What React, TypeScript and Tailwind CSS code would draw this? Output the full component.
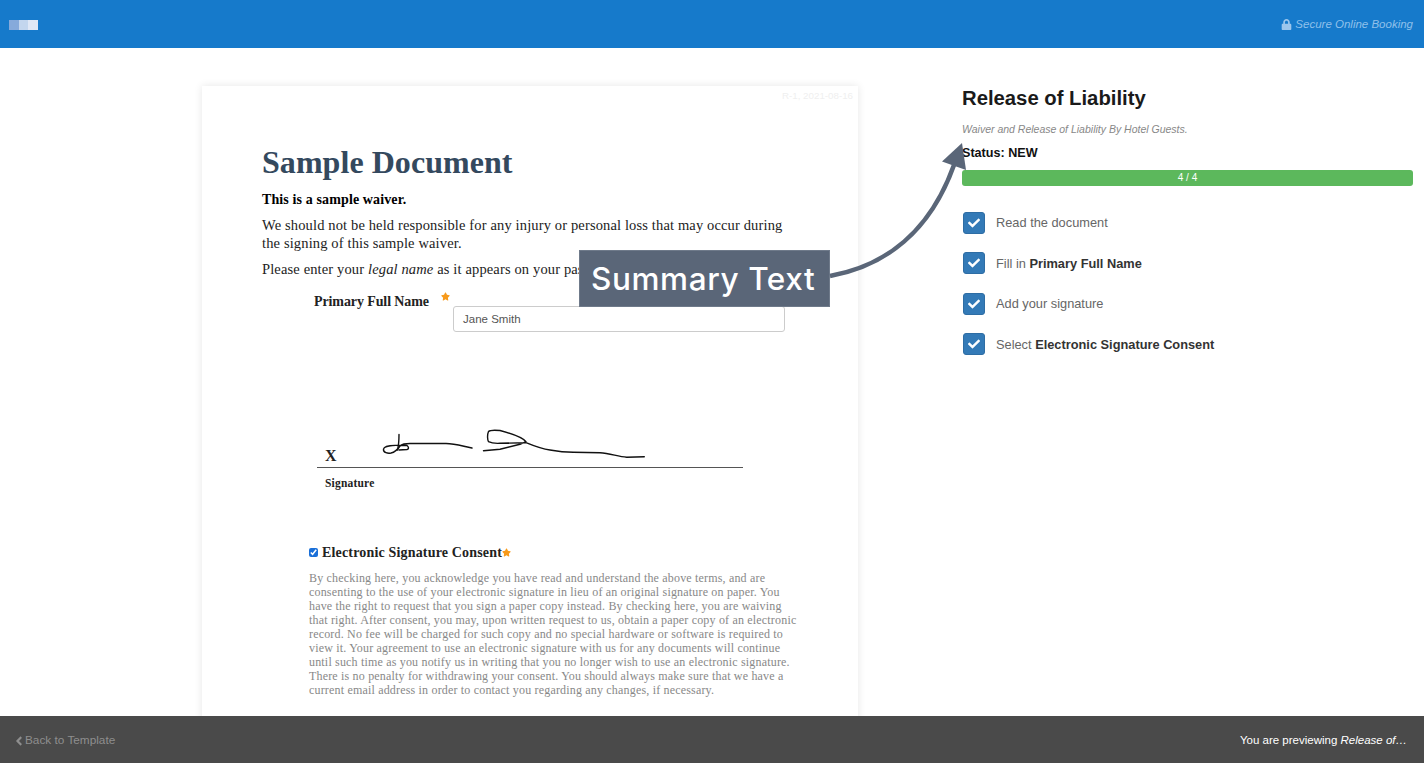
import { FaLock, FaCheck, FaStar, FaAngleLeft } from "react-icons/fa";

const serif = "font-['Liberation_Serif',serif]";

const consentLines = [
  "By checking here, you acknowledge you have read and understand the above terms, and are",
  "consenting to the use of your electronic signature in lieu of an original signature on paper. You",
  "have the right to request that you sign a paper copy instead. By checking here, you are waiving",
  "that right. After consent, you may, upon written request to us, obtain a paper copy of an electronic",
  "record. No fee will be charged for such copy and no special hardware or software is required to",
  "view it. Your agreement to use an electronic signature with us for any documents will continue",
  "until such time as you notify us in writing that you no longer wish to use an electronic signature.",
  "There is no penalty for withdrawing your consent. You should always make sure that we have a",
  "current email address in order to contact you regarding any changes, if necessary.",
];

function CheckRow({ children }: { children: React.ReactNode }) {
  return (
    <div className="flex items-center h-[22px]">
      <div className="ml-px w-[22px] h-[22px] rounded-[3px] bg-[#337ab7] border border-[#2e6da4] flex items-center justify-center text-white">
        <FaCheck size={12} />
      </div>
      <span className="ml-[11px] text-[12.8px] text-[#666]">{children}</span>
    </div>
  );
}

export default function App() {
  return (
    <div className="relative h-screen flex flex-col overflow-hidden bg-white font-['Liberation_Sans',sans-serif]">
      {/* top bar */}
      <header className="h-[48px] shrink-0 bg-[#167acb] flex items-center justify-between pl-[9px] pr-[11px]">
        <div className="flex h-[10px] mt-px">
          <div className="w-[10px] bg-[#86aadb]" />
          <div className="w-[9px] bg-[#c3d6ee]" />
          <div className="w-[10px] bg-[#e0e8f6]" />
        </div>
        <div className="flex items-center gap-[3px] text-[11.5px] italic text-[#8fc0ea]">
          <FaLock size={11} className="text-[#9cc6ec]" />
          <span className="pt-px">Secure Online Booking</span>
        </div>
      </header>

      <main className="flex-1 min-h-0 overflow-hidden flex pl-[202px] pt-[38px]">
        {/* document */}
        <div className="w-[656px] shrink-0 self-start bg-white shadow-[0_0_8px_rgba(0,0,0,0.1)] pb-[40px]">
          <div className="text-right pr-[5px] pt-[4px] text-[9.75px] leading-[12px] text-[#efefef]">R-1, 2021-08-16</div>
          <div className={`${serif} pl-[60px] text-[#222]`}>
            <h1 className="mt-[42px] text-[32px] leading-[36px] font-bold text-[#34495e] tracking-[0.05px]">Sample Document</h1>
            <p className="mt-[11px] text-[14px] leading-[18px] font-bold text-black tracking-[0.12px]">This is a sample waiver.</p>
            <p className="mt-[7px] text-[14.5px] leading-[18px] tracking-[0.14px] whitespace-nowrap">
              We should not be held responsible for any injury or personal loss that may occur during
              <br />
              the signing of this sample waiver.
            </p>
            <p className="mt-[8px] text-[14.5px] leading-[18px] tracking-[0.14px] whitespace-nowrap">
              Please enter your <em>legal name</em> as it appears on your passport.
            </p>

            <div className="mt-[14px] flex items-start h-[40px]">
              <label className="ml-[52px] w-[127px] pt-px text-[14px] leading-[18px] font-bold tracking-[-0.1px] whitespace-nowrap">Primary Full Name</label>
              <FaStar size={9} className="text-[#f79a1b]" />
              <div className="ml-[3px] mt-[14px] w-[332px] h-[26px] border border-[#ccc] rounded-[3px] pl-[9px] pt-px flex items-center font-['Liberation_Sans',sans-serif] text-[11.5px] text-[#555]">
                Jane Smith
              </div>
            </div>

            <div className="mt-[88px] ml-[55px] w-[426px] flex items-end border-b border-[#555] h-[48px]">
              <span className="w-[23px] pl-[8px] pb-[2px] text-[16px] leading-[18px] font-bold">X</span>
              <svg width="403" height="47" viewBox="340 420 403 47" fill="none" stroke="#111" strokeWidth="1.4" strokeLinecap="round" strokeLinejoin="round">
                <path d="M472 448C462 446 455 443.500 446 443.500L410 443.500C405 443.500 402 443.500 400 446C398 449 396 452 391 453C388 453.500 383 453 383.500 449C384 446 392 445 400 445.500L407 445.500C409 447 409 449 407 449.500L399 450" />
                <path d="M399 434.500C399 440 398.500 446 397.500 450" />
                <path d="M483.500 450.700L500 449.300L520 444.300L526 441.700C523 438 517 435 500 430.500C495 430 490 430 488.500 431.500C487 435 487.500 440 488.500 441.700C492 443.500 496 443.500 500 443.300L526 442.700C534 446 542 449 550 450C558 451.500 565 452.300 573.300 452.300L600 452.700C610 453.500 618 456.500 626.700 457.300L644.300 456.700" />
              </svg>
            </div>
            <div className="mt-[8px] ml-[63px] text-[11.5px] leading-[14px] font-bold tracking-[0.2px]">Signature</div>

            <div className="mt-[53px] ml-[47px] flex items-center h-[18px]">
              <input type="checkbox" defaultChecked readOnly className="w-[9px] h-[9px] accent-[#1a6fd8]" />
              <span className="ml-[4px] pt-px text-[14px] leading-[18px] font-bold tracking-[0.17px] whitespace-nowrap">Electronic Signature Consent</span>
              <FaStar size={9} className="text-[#f79a1b]" />
            </div>
            <div className="mt-[10px] ml-[47px] text-[12px] leading-[14px] tracking-[0.18px] text-[#888] whitespace-nowrap">
              {consentLines.map((line) => (
                <div key={line}>{line}</div>
              ))}
            </div>
          </div>
        </div>

        {/* summary */}
        <aside className="ml-[104px] w-[451px] shrink-0">
          <h2 className="text-[20.3px] leading-[24px] font-bold text-[#1a1a1a] whitespace-nowrap">Release of Liability</h2>
          <p className="mt-[12px] text-[10.5px] leading-[14px] italic text-[#888]">Waiver and Release of Liability By Hotel Guests.</p>
          <p className="mt-[8px] pt-px h-[16px] text-[12.6px] leading-[16px] font-bold text-[#111]">Status: NEW</p>
          <div className="mt-[10px] h-[16px] rounded-[3px] bg-[#5cb85c] text-center text-[10px] leading-[16px] text-white">4 / 4</div>
          <div className="mt-[26px] flex flex-col gap-[18.4px]">
            <CheckRow>Read the document</CheckRow>
            <CheckRow>
              Fill in <b className="text-[#333]">Primary Full Name</b>
            </CheckRow>
            <CheckRow>Add your signature</CheckRow>
            <CheckRow>
              Select <b className="text-[#333]">Electronic Signature Consent</b>
            </CheckRow>
          </div>
        </aside>
      </main>

      <footer className="h-[47px] shrink-0 bg-[#4a4a4a] flex items-center justify-between pl-[12px] pr-[17px] pt-[2px]">
        <div className="flex items-center text-[11.8px] text-[#8e8e8e]">
          <FaAngleLeft size={14} />
          <span className="-ml-px">Back to Template</span>
        </div>
        <div className="text-[11.5px] text-white">
          You are previewing <em>Release of…</em>
        </div>
      </footer>

      {/* callout on top of the page */}
      <div className="absolute left-[579px] top-[250px] w-[251px] h-[57px] bg-[#5a6678] border border-[#6f7a8a] flex items-center pl-[11px] pt-px font-['Inter',sans-serif] text-[31.5px] tracking-[0.6px] font-medium text-white whitespace-nowrap">
        Summary Text
      </div>
      <svg className="absolute left-0 top-0 pointer-events-none" width="1424" height="763" viewBox="0 0 1424 763" fill="none">
        <path d="M830 276C885 266 930 232 954 165" stroke="#5a6678" strokeWidth="4.5" />
        <path d="M962 143L942 161.500L966 170Z" fill="#5a6678" />
      </svg>
    </div>
  );
}
